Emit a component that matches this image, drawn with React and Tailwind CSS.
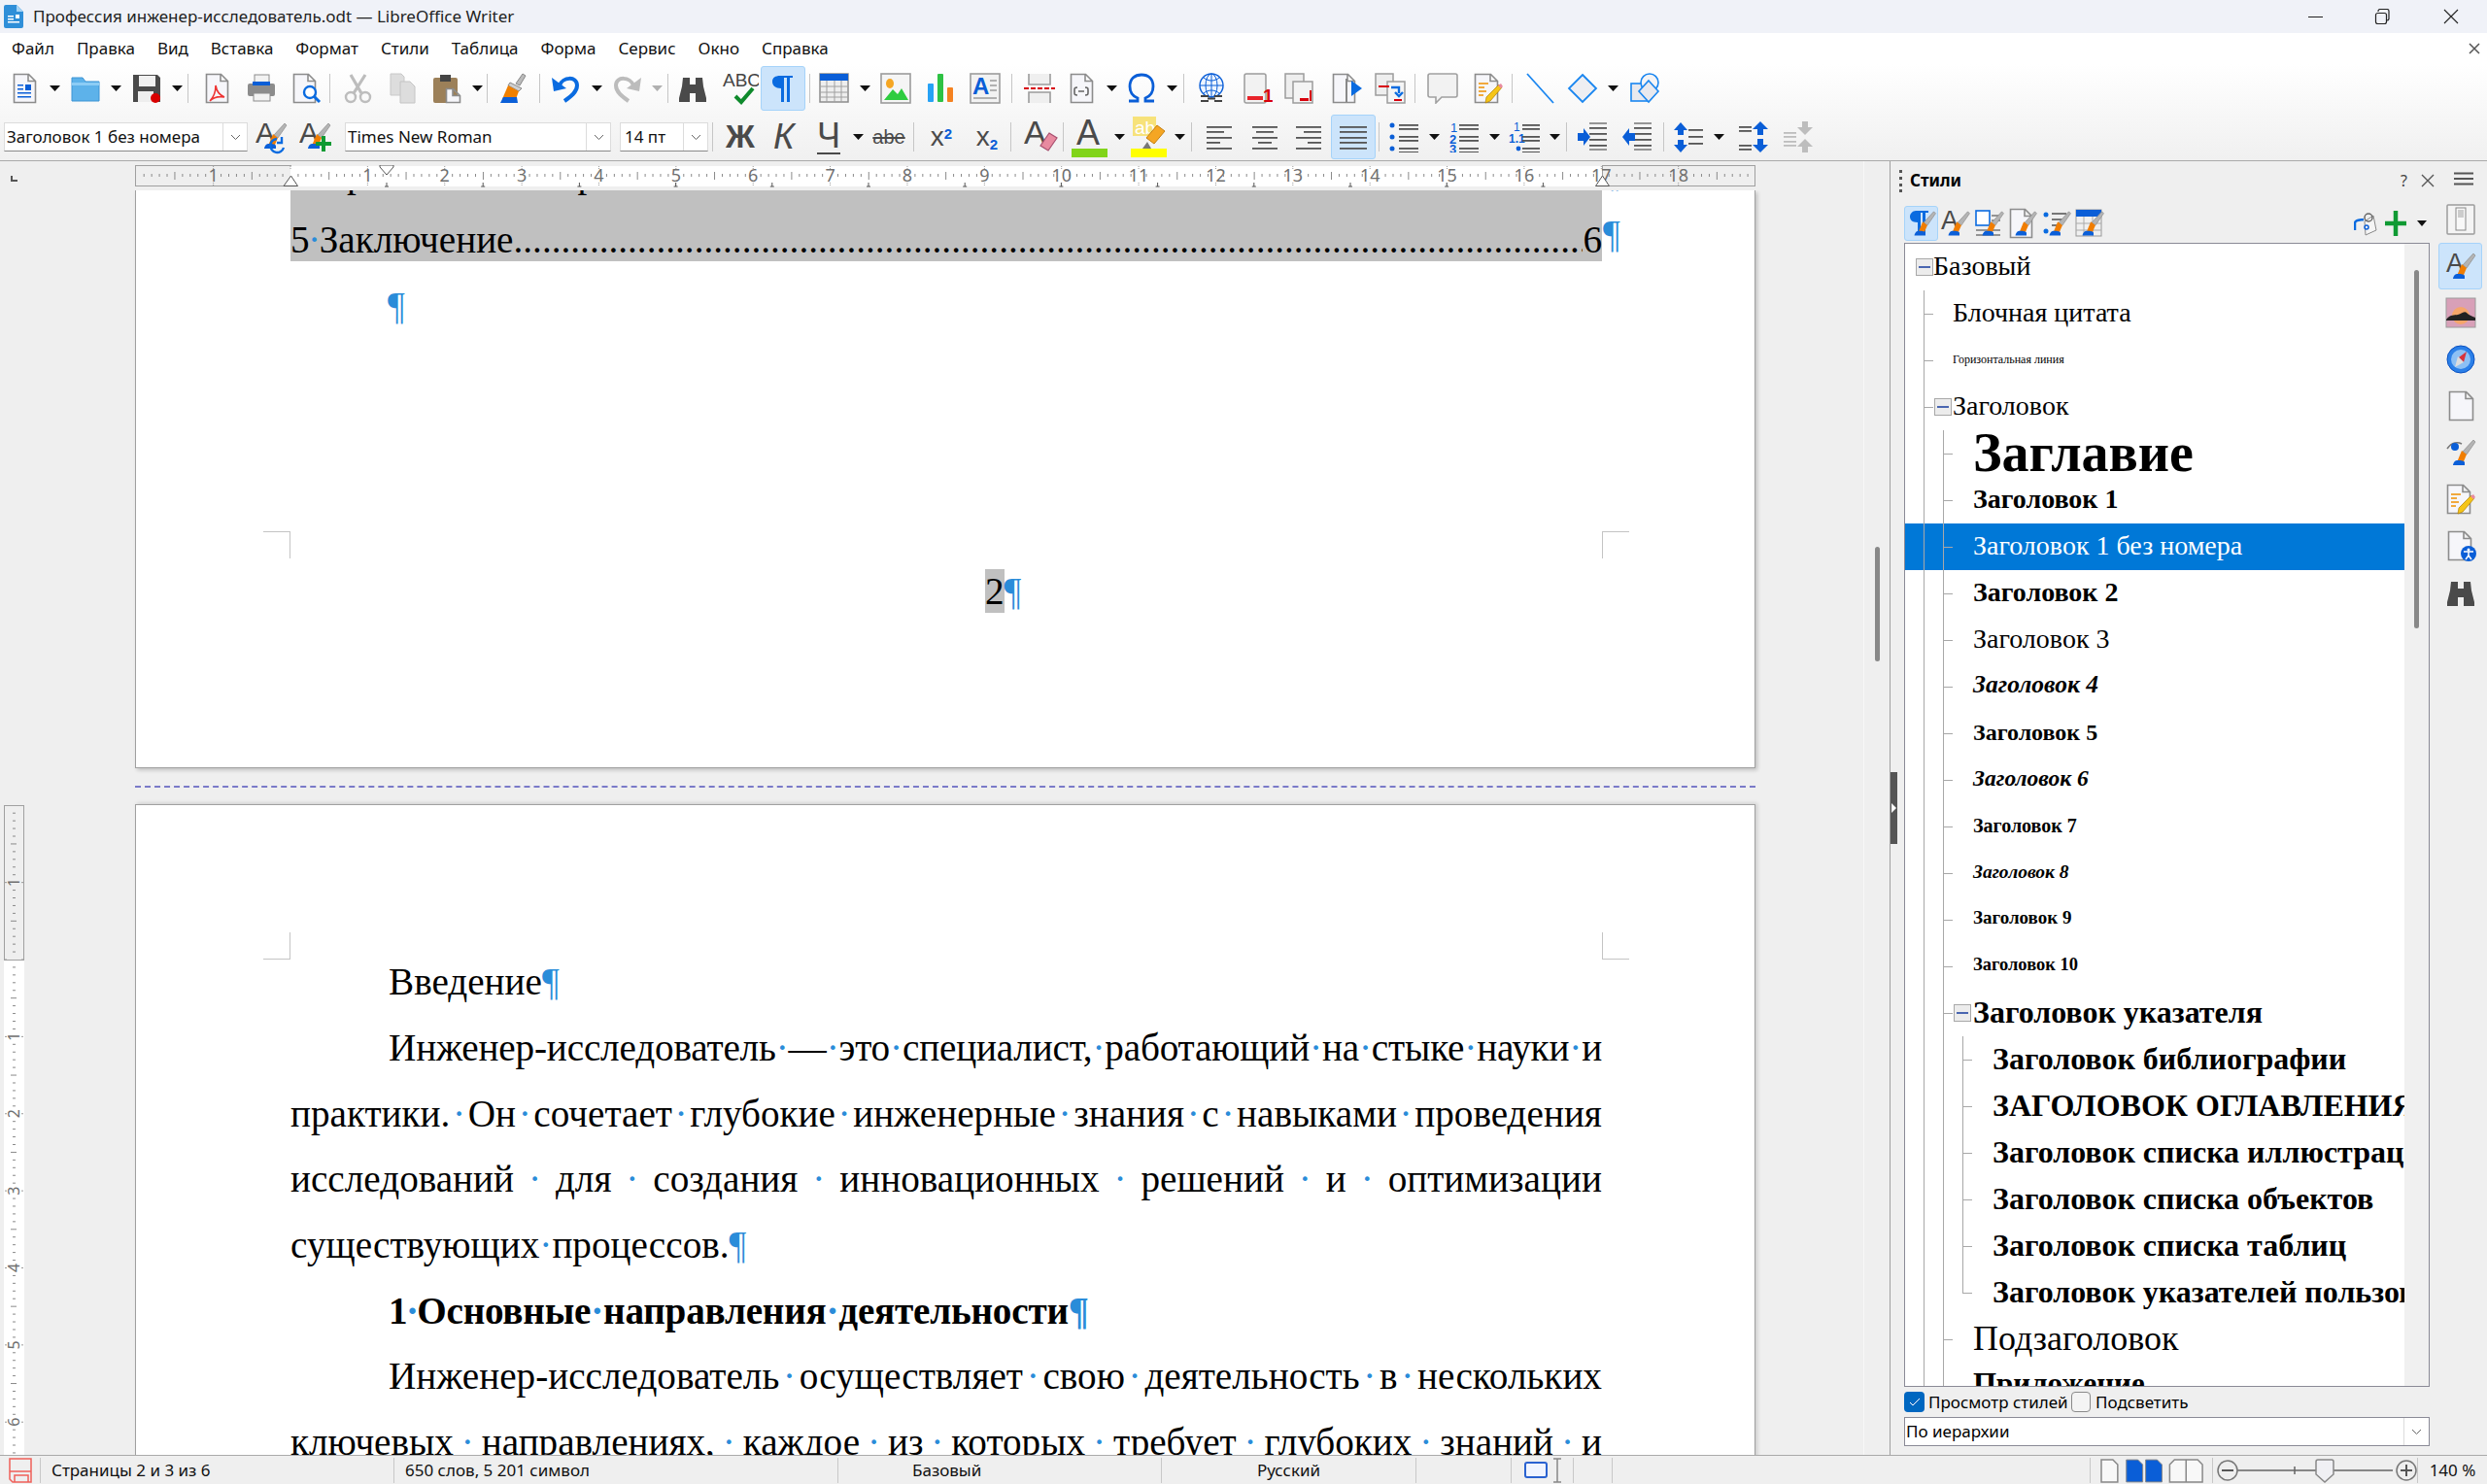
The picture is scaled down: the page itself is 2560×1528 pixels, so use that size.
// App.jsx — окно LibreOffice Writer со стилями
import React from "react";

const serif = "font-['Liberation_Serif',serif]";

const I = ({ children, w = 32, h = 32 }) => (
  <svg width={w} height={h} viewBox={`0 0 ${w} ${h}`} className="shrink-0">
    {children}
  </svg>
);

const Page = ({ x = 5, y = 1, w = 22, h = 30, fill = "#f6f6fa", stroke = "#8c8c8c" }) => (
  <path
    d={`M${x + 0.5} ${y + 0.5}h${w - 7}l7 7v${h - 8}h-${w}z M${x + w - 7} ${y + 0.5}v7h7`}
    fill={fill}
    stroke={stroke}
    strokeWidth="1.6"
  />
);

const Tip = ({ dx = 0, dy = 0 }) => (
  <g transform={`translate(${dx} ${dy})`}>
    <path d="M29 3l2 2-9 13-4-3z" fill="#b4b4b4" stroke="#8a8a8a" strokeWidth=".7" />
    <path d="M17 14l5 4-3 7-7 1z" fill="#f07d00" />
    <path d="M12 24c3 0 7 0 8 2v3H8c0-2 2-5 4-5z" fill="#0b5fd8" />
  </g>
);

const Bino = ({ c = "#4a4a4a" }) => (
  <path
    d="M6 5h7v7h6V5h7l1 9 3 12v4H19v-9h-6v9H2v-4l3-12z"
    fill={c}
  />
);

const AlignLines = ({ kind }) => {
  const ys = [5, 10, 16, 21, 27];
  const long = [26, 18, 26, 14, 26];
  return (
    <>
      {ys.map((y, i) => {
        const l = kind === "j" ? 28 : long[i];
        const x = kind === "l" ? 3 : kind === "r" ? 29 - l : 16 - l / 2;
        return <rect key={y} x={x} y={y} width={l} height="1.8" fill="#555" />;
      })}
    </>
  );
};

const Lines = ({ x = 12, w = 18, ys = [6, 11, 17, 22, 27], c = "#555" }) => (
  <>
    {ys.map((y) => (
      <rect key={y} x={x} y={y} width={w} height="1.8" fill={c} />
    ))}
  </>
);

const Icons = {
  newDoc: (
    <I>
      <Page />
      <path d="M9 12h6v1.6H9zm0 4h6v1.6H9zm0 4h14v1.6H9zm0 4h14v1.6H9z" fill="#0a5ed7" />
      <rect x="17" y="12" width="6" height="6" fill="#0a5ed7" />
    </I>
  ),
  open: (
    <I>
      <path d="M2 5h11l3 4h14v20H2z" fill="#5db2ea" stroke="#3d94d4" />
      <rect x="2" y="10" width="28" height="3" fill="#8cccf5" />
    </I>
  ),
  save: (
    <I>
      <path d="M2 2h25l3 3v25H2z" fill="#4a4a4a" />
      <rect x="8" y="3" width="17" height="11" fill="#f0f0f0" />
      <rect x="7" y="19" width="16" height="11" fill="#eee" />
      <circle cx="25" cy="26" r="5" fill="#d90000" />
    </I>
  ),
  pdf: (
    <I>
      <Page />
      <path d="M9 29c4-4 6-9 6-16 1 6 4 10 9 12-6-1-11 0-15 4z" fill="none" stroke="#e33" strokeWidth="1.6" />
    </I>
  ),
  print: (
    <I>
      <rect x="9" y="2" width="15" height="10" fill="#f2f2f2" stroke="#8c8c8c" />
      <rect x="2" y="11" width="28" height="13" rx="2" fill="#8c8c8c" />
      <rect x="7" y="9" width="18" height="4" fill="#0a5ed7" />
      <rect x="8" y="21" width="17" height="8" fill="#f2f2f2" stroke="#8c8c8c" />
    </I>
  ),
  preview: (
    <I>
      <Page x={3} />
      <circle cx="20" cy="20" r="6" fill="#fff" stroke="#0a6be0" strokeWidth="2.4" />
      <path d="M24 24l6 6" stroke="#0a6be0" strokeWidth="3" />
    </I>
  ),
  cut: (
    <I>
      <path d="M9 2l11 19M24 2L12 21" stroke="#bdbdbd" strokeWidth="3.2" />
      <circle cx="9" cy="25" r="5" fill="none" stroke="#bdbdbd" strokeWidth="2.4" />
      <circle cx="24" cy="25" r="5" fill="none" stroke="#bdbdbd" strokeWidth="2.4" />
    </I>
  ),
  copy: (
    <I>
      <path d="M4 1h11l3 3v19H4z" fill="#ddd" stroke="#c8c8c8" />
      <path d="M14 9h10l5 5v17H14z" fill="#ddd" stroke="#c4c4c4" />
    </I>
  ),
  paste: (
    <I>
      <rect x="2" y="5" width="25" height="26" rx="2" fill="#9c8059" />
      <rect x="9" y="2" width="11" height="7" fill="#444" />
      <Page x={15} y={16} w={14} h={15} />
    </I>
  ),
  brush: (
    <I>
      <path d="M27 1l3 2-6 10-4-2z" fill="#bbb" stroke="#888" />
      <path d="M14 10l12 6-3 3-11-6z" fill="#cfcfcf" stroke="#888" />
      <path d="M12 13l11 6-3 8H6z" fill="#f08000" />
      <path d="M7 25h14l1 6H4z" fill="#0b5fd8" />
    </I>
  ),
  undo: (
    <I>
      <path d="M9 13C12 4 27 3 27 13c0 7-7 12-13 16" fill="none" stroke="#0a6be0" strokeWidth="4" />
      <path d="M1 5l2 14 13-3z" fill="#0a6be0" />
    </I>
  ),
  redo: (
    <I>
      <path d="M23 13C20 4 5 3 5 13c0 7 7 12 13 16" fill="none" stroke="#bcbcbc" strokeWidth="4" />
      <path d="M31 5l-2 14-13-3z" fill="#bcbcbc" />
    </I>
  ),
  bino: (
    <I>
      <Bino />
    </I>
  ),
  abc: (
    <I w={38} h={38}>
      <text x="1" y="17" fontSize="19" fill="#444" fontFamily="Liberation Sans">ABC</text>
      <path d="M14 27l6 6 12-14" fill="none" stroke="#0f8a2c" strokeWidth="4" />
    </I>
  ),
  pil: (
    <I>
      <path d="M13 3h13v2h-3v25h-3V5h-3v25h-3V16c-6 0-9-3-9-7s3-6 8-6z" fill="#0a6be0" />
    </I>
  ),
  table: (
    <I>
      <rect x="1" y="1" width="29" height="29" fill="#eee" stroke="#8c8c8c" strokeWidth="1.5" />
      <rect x="1" y="1" width="29" height="7" fill="#0a5ed7" />
      <path d="M1 14h29M1 20h29M1 25h29M8 8v22M16 8v22M23 8v22" stroke="#a0a0a0" />
    </I>
  ),
  image: (
    <I>
      <rect x="1" y="1" width="30" height="30" fill="#f5f5f5" stroke="#9c9c9c" strokeWidth="1.6" />
      <ellipse cx="10" cy="11" rx="4" ry="5" fill="#f5a623" />
      <path d="M4 28l9-11 5 5 4-6 7 12z" fill="#2ecc40" />
    </I>
  ),
  chart: (
    <I>
      <rect x="3" y="11" width="6" height="19" rx="1" fill="#27a2f5" />
      <rect x="13" y="1" width="6" height="29" rx="1" fill="#2ec244" />
      <rect x="23" y="15" width="6" height="15" rx="1" fill="#f58220" />
    </I>
  ),
  textbox: (
    <I>
      <rect x="1" y="1" width="30" height="30" fill="#f2f2f2" stroke="#9c9c9c" strokeWidth="1.6" />
      <text x="3" y="22" fontSize="24" fontWeight="700" fill="#0a5ed7" fontFamily="Liberation Sans">A</text>
      <path d="M21 8h7M21 13h7M21 18h7M4 26h24" stroke="#9c9c9c" strokeWidth="1.6" />
    </I>
  ),
  pbreak: (
    <I>
      <path d="M5 1v11h22V1M5 31V20h22v11" fill="#efefef" stroke="#9c9c9c" strokeWidth="1.6" />
      <path d="M0 16h32" stroke="#d8000c" strokeWidth="2" strokeDasharray="5 2" />
    </I>
  ),
  field: (
    <I>
      <Page />
      <path d="M12 15c-3 0-3 1-3 3v2c0 2 0 3 3 3m8-8c3 0 3 1 3 3v2c0 2 0 3-3 3M13 19h6" fill="none" stroke="#666" strokeWidth="1.6" />
    </I>
  ),
  omega: (
    <I>
      <path d="M3 29h9v-3c-5-2-8-6-8-12C4 6 9 2 16 2s12 4 12 12c0 6-3 10-8 12v3h9" fill="none" stroke="#0a5ed7" strokeWidth="2.8" />
    </I>
  ),
  link: (
    <I>
      <circle cx="16" cy="13" r="12" fill="#eef5ff" stroke="#0a5ed7" strokeWidth="1.4" />
      <path d="M4 13h24M16 1v24M8 5c5 4 11 4 16 0M8 21c5-4 11-4 16 0" fill="none" stroke="#0a5ed7" />
      <ellipse cx="16" cy="13" rx="6" ry="12" fill="none" stroke="#0a5ed7" />
      <path d="M5 24h8M5 29h8M19 24h8M19 29h8M12 26.500h8" stroke="#444" strokeWidth="2" />
    </I>
  ),
  foot: (
    <I>
      <rect x="3" y="1" width="22" height="30" rx="2" fill="#f2f2f2" stroke="#9c9c9c" strokeWidth="1.5" />
      <rect x="6" y="24" width="16" height="4" fill="#e8232a" />
      <text x="22" y="30" fontSize="19" fontWeight="700" fill="#d8000c" fontFamily="Liberation Sans">1</text>
    </I>
  ),
  end: (
    <I>
      <rect x="1" y="1" width="19" height="25" fill="#eee" stroke="#9c9c9c" strokeWidth="1.5" />
      <rect x="9" y="9" width="20" height="22" fill="#f4f4f4" stroke="#9c9c9c" strokeWidth="1.5" />
      <rect x="16" y="26" width="9" height="3" fill="#d8000c" />
      <rect x="26" y="18" width="2" height="11" fill="#d8000c" />
    </I>
  ),
  mark: (
    <I>
      <Page x={1} />
      <rect x="14" y="6" width="2" height="24" fill="#888" />
      <path d="M20 8l11 8-11 8z" fill="#0a6be0" />
    </I>
  ),
  cross: (
    <I>
      <rect x="1" y="1" width="18" height="22" fill="#eee" stroke="#9c9c9c" strokeWidth="1.5" />
      <rect x="13" y="9" width="18" height="22" fill="#f5f5f5" stroke="#9c9c9c" strokeWidth="1.5" />
      <rect x="4" y="13" width="11" height="2" fill="#d8000c" />
      <rect x="20" y="27" width="8" height="2" fill="#d8000c" />
      <path d="M17 15h8v6M21 20l4 4 4-4" fill="none" stroke="#0a6be0" strokeWidth="2.4" />
    </I>
  ),
  comment: (
    <I>
      <path d="M3 1h26a2 2 0 012 2v20a2 2 0 01-2 2H15l-6 6v-6H3a2 2 0 01-2-2V3a2 2 0 012-2z" fill="#f2f2f2" stroke="#a0a0a0" strokeWidth="1.6" />
    </I>
  ),
  track: (
    <I>
      <Page x={2} w={23} />
      <path d="M6 11h10M6 15h6M6 19h8M6 23h5" stroke="#f09000" strokeWidth="1.5" />
      <path d="M27 12l3 3-12 14-5 2 1-6z" fill="#f5c518" stroke="#b07d00" strokeWidth=".7" />
      <path d="M26 13l3 3 2-2-2-3z" fill="#e88aa0" />
    </I>
  ),
  line: (
    <I>
      <path d="M3 1l27 30" stroke="#1a86f0" strokeWidth="1.8" />
    </I>
  ),
  diamond: (
    <I>
      <path d="M16 2l14 14-14 14L2 16z" fill="#eeeef2" stroke="#1a86f0" strokeWidth="1.8" />
    </I>
  ),
  shapes: (
    <I>
      <rect x="2" y="11" width="18" height="18" fill="#e9e9ee" stroke="#1a86f0" strokeWidth="1.6" />
      <circle cx="21" cy="10" r="9" fill="#f4f4f6" stroke="#1a86f0" strokeWidth="1.6" />
      <path d="M20 8l10 11-10 11-10-11z" fill="#e9e9ee" stroke="#1a86f0" strokeWidth="1.6" />
    </I>
  ),
  styleUpd: (
    <I w={36} h={36}>
      <text x="0" y="24" fontSize="30" fill="#4a4a4a" fontFamily="Liberation Sans">A</text>
      <Tip dx={1} dy={1} />
      <path d="M22 20a7 7 0 107 9M27 18v6h-5" fill="none" stroke="#0a6be0" strokeWidth="2.4" />
    </I>
  ),
  styleNew: (
    <I w={36} h={36}>
      <text x="0" y="24" fontSize="30" fill="#4a4a4a" fontFamily="Liberation Sans">A</text>
      <Tip dx={1} dy={1} />
      <path d="M25 17v16M17 25h16" stroke="#0f9a33" strokeWidth="4" />
    </I>
  ),
  clear: (
    <I w={36} h={38}>
      <text x="0" y="26" fontSize="34" fill="#4a4a4a" fontFamily="Liberation Sans">A</text>
      <path d="M26 15l8 5-9 13-8-5z" fill="#e88aa0" stroke="#a85070" strokeWidth="1.2" />
    </I>
  ),
  fontColor: (
    <I w={38} h={42}>
      <text x="6" y="29" fontSize="36" fill="#4a4a4a" fontFamily="Liberation Sans">A</text>
      <rect x="1" y="33" width="37" height="9" fill="#81d41a" />
    </I>
  ),
  hilite: (
    <I w={38} h={42}>
      <rect x="3" y="0" width="24" height="20" fill="#f7e27a" />
      <text x="5" y="18" fontSize="19" fill="#fff" fontFamily="Liberation Sans">ab</text>
      <path d="M28 9l8 6-11 13-8-6z" fill="#f5a623" stroke="#c47f10" />
      <path d="M13 33l5-7 4 7z" fill="#777" />
      <rect x="1" y="33" width="37" height="9" fill="#ffff00" />
    </I>
  ),
  bullets: (
    <I>
      <circle cx="4" cy="4" r="2.5" fill="#0a5ed7" />
      <circle cx="4" cy="16" r="2.5" fill="#0a5ed7" />
      <circle cx="4" cy="28" r="2.5" fill="#0a5ed7" />
      <Lines x={11} w={20} ys={[3, 7, 15, 19, 27, 31]} />
    </I>
  ),
  nums: (
    <I>
      <text x="2" y="11" fontSize="13" fill="#0a5ed7" fontFamily="Liberation Sans">1</text>
      <text x="1" y="23" fontSize="13" fontWeight="700" fill="#0a5ed7" fontFamily="Liberation Sans">2</text>
      <text x="1" y="33" fontSize="13" fontWeight="700" fill="#0a5ed7" fontFamily="Liberation Sans">3</text>
      <Lines x={11} w={20} ys={[3, 7, 15, 19, 27, 31]} />
    </I>
  ),
  outline: (
    <I>
      <text x="5" y="10" fontSize="12" fill="#0a5ed7" fontFamily="Liberation Sans">1</text>
      <text x="0" y="22" fontSize="12" fontWeight="700" fill="#0a5ed7" fontFamily="Liberation Sans">1.1</text>
      <circle cx="10" cy="28" r="2.4" fill="#0a5ed7" />
      <Lines x={14} w={18} ys={[3, 7, 15, 19, 27, 31]} />
    </I>
  ),
  indInc: (
    <I>
      <Lines x={13} w={18} ys={[6, 12, 18, 24]} />
      <path d="M1 12h6V7l7 9-7 9v-5H1z" fill="#0a5ed7" />
      <path d="M13 2h18M13 29h18" stroke="#777" strokeWidth="1.4" />
    </I>
  ),
  indDec: (
    <I>
      <Lines x={13} w={18} ys={[6, 12, 18, 24]} />
      <path d="M14 12H8V7l-7 9 7 9v-5h6z" fill="#0a5ed7" />
      <path d="M13 2h18M13 29h18" stroke="#777" strokeWidth="1.4" />
    </I>
  ),
  spacing: (
    <I>
      <path d="M8 1l7 8h-4v5H5V9H1zM8 32l7-8h-4v-5H5v5H1z" fill="#0a5ed7" />
      <Lines x={16} w={15} ys={[8, 15, 22]} />
    </I>
  ),
  paraInc: (
    <I>
      <Lines x={1} w={13} ys={[5, 9, 24, 28]} />
      <path d="M23 0l8 8h-5v6h-6V8h-5zM23 32l8-8h-5v-6h-6v6h-5z" fill="#0a5ed7" />
    </I>
  ),
  paraDec: (
    <I>
      <Lines x={1} w={13} ys={[11, 15, 20, 24]} c="#bdbdbd" />
      <path d="M23 14l8-8h-5V0h-6v6h-5zM23 18l8 8h-5v6h-6v-6h-5z" fill="#bdbdbd" />
    </I>
  ),
};

const Btn = ({ c = "", active, children }) => (
  <div
    className={`flex h-[46px] w-[46px] shrink-0 items-center justify-center rounded-[3px] border ${
      active ? "border-[#a5d3fa] bg-[#cce4fb]" : "border-transparent"
    } ${c}`}
  >
    {children}
  </div>
);

const Arr = ({ c = "", off }) => (
  <div className={`flex h-[46px] w-[17px] shrink-0 items-center justify-center ${c}`}>
    <svg width="11" height="6" viewBox="0 0 11 6">
      <path d="M0 0h11L5.500 6z" fill={off ? "#b0b0b0" : "#111"} />
    </svg>
  </div>
);

const Sep = ({ c = "" }) => <div className={`h-[30px] w-px shrink-0 bg-[#c6c6c6] ${c}`} />;

const Combo = ({ c = "", w = "", btn = "w-[25px]", children }) => (
  <div className={`flex h-[30px] shrink-0 items-center border border-[#dcdcdc] border-b-[#8a8a8a] bg-white text-[17px] text-[#111] ${w} ${c}`}>
    <span className="flex-1 whitespace-nowrap pl-[2px]">{children}</span>
    <span className={`flex h-full shrink-0 items-center justify-center border-l border-[#dcdcdc] ${btn}`}>
      <svg width="11" height="7" viewBox="0 0 11 7">
        <path d="M1 1l4.500 4.500L10 1" fill="none" stroke="#666" />
      </svg>
    </span>
  </div>
);

function Toolbars() {
  return (
    <div className="h-[100px] border-b border-[#aaa] bg-linear-to-b from-white to-[#f0f0f0]">
      <div className="flex h-[49px] items-center pl-[2px]">
        <Btn>{Icons.newDoc}</Btn><Arr />
        <Btn>{Icons.open}</Btn><Arr />
        <Btn>{Icons.save}</Btn><Arr />
        <Sep c="ml-[2px] mr-[6px]" />
        <Btn>{Icons.pdf}</Btn>
        <Btn>{Icons.print}</Btn>
        <Btn>{Icons.preview}</Btn>
        <Sep c="ml-[1px] mr-[5px]" />
        <Btn>{Icons.cut}</Btn>
        <Btn>{Icons.copy}</Btn>
        <Btn>{Icons.paste}</Btn><Arr />
        <Sep c="ml-[1px] mr-[2px]" />
        <Btn>{Icons.brush}</Btn>
        <Sep c="ml-[5px] mr-[4px]" />
        <Btn>{Icons.undo}</Btn><Arr />
        <Btn c="-ml-[1px]">{Icons.redo}</Btn><Arr off />
        <Sep c="ml-[2px] mr-[2px]" />
        <Btn>{Icons.bino}</Btn>
        <Btn c="ml-[3px]">{Icons.abc}</Btn>
        <Btn c="-ml-[2px]" active>{Icons.pil}</Btn>
        <Sep c="ml-[4px] mr-[2px]" />
        <Btn>{Icons.table}</Btn><Arr />
        <Btn>{Icons.image}</Btn>
        <Btn>{Icons.chart}</Btn>
        <Btn>{Icons.textbox}</Btn>
        <Sep c="ml-[4px] mr-[5px]" />
        <Btn>{Icons.pbreak}</Btn>
        <Btn c="-ml-[3px]">{Icons.field}</Btn><Arr />
        <Btn c="-ml-[1px]">{Icons.omega}</Btn><Arr />
        <Sep c="ml-[3px] mr-[5px]" />
        <Btn>{Icons.link}</Btn>
        <Btn c="ml-[1px]">{Icons.foot}</Btn>
        <Btn c="-ml-[2px]">{Icons.end}</Btn>
        <Btn c="ml-[3px]">{Icons.mark}</Btn>
        <Btn c="-ml-[2px]">{Icons.cross}</Btn>
        <Sep c="ml-[2px] mr-[5px]" />
        <Btn>{Icons.comment}</Btn>
        <Btn c="ml-[1px]">{Icons.track}</Btn>
        <Sep c="ml-[1px] mr-[5px]" />
        <Btn>{Icons.line}</Btn>
        <Btn c="-ml-[2px]">{Icons.diamond}</Btn><Arr />
        <Btn c="ml-[1px]">{Icons.shapes}</Btn>
      </div>
      <div className="flex h-[50px] items-center pl-[4px] pt-[2px]">
        <Combo w="w-[251px]">Заголовок 1 без номера</Combo>
        <Btn c="ml-[3px]">{Icons.styleUpd}</Btn>
        <Btn c="-ml-[1px]">{Icons.styleNew}</Btn>
        <Combo w="w-[274px]" c="ml-[6px]">Times New Roman</Combo>
        <Combo w="w-[91px]" c="ml-[9px] pl-[2px]" btn="w-[25px]">14 пт</Combo>
        <Sep c="ml-[4px] mr-[5px]" />
        <Btn><span className="font-['Liberation_Sans',sans-serif] text-[33px] font-bold text-[#4a4a4a]">Ж</span></Btn>
        <Btn c="-ml-[1px]"><span className="font-['Liberation_Sans',sans-serif] text-[37px] italic text-[#4a4a4a]">К</span></Btn>
        <Btn><span className="border-b-2 border-[#4a4a4a] font-['Liberation_Sans',sans-serif] text-[36px] leading-[34px] text-[#4a4a4a]">Ч</span></Btn>
        <Arr c="-ml-[1px]" />
        <Btn><span className="font-['Liberation_Sans',sans-serif] text-[20px] text-[#4a4a4a] line-through">abe</span></Btn>
        <Sep c="ml-[2px] mr-[5px]" />
        <Btn><span className="font-['Liberation_Sans',sans-serif] text-[28px] text-[#4a4a4a]">x<sup className="text-[15px] font-bold text-[#0a5ed7]">2</sup></span></Btn>
        <Btn c="ml-[1px]"><span className="font-['Liberation_Sans',sans-serif] text-[28px] text-[#4a4a4a]">x<sub className="text-[15px] font-bold text-[#0a5ed7]">2</sub></span></Btn>
        <Sep c="ml-[1px] mr-[8px]" />
        <Btn>{Icons.clear}</Btn>
        <Sep c="-ml-[1px] mr-[3px]" />
        <Btn>{Icons.fontColor}</Btn><Arr />
        <Btn c="-ml-[2px]">{Icons.hilite}</Btn><Arr c="ml-[1px]" />
        <Sep c="ml-[3px] mr-[5px]" />
        <Btn><I><AlignLines kind="l" /></I></Btn>
        <Btn c="ml-[1px]"><I><AlignLines kind="c" /></I></Btn>
        <Btn c="-ml-[1px]"><I><AlignLines kind="r" /></I></Btn>
        <Btn active><I><AlignLines kind="j" /></I></Btn>
        <Sep c="ml-[3px] mr-[2px]" />
        <Btn>{Icons.bullets}</Btn><Arr />
        <Btn c="-ml-[1px]">{Icons.nums}</Btn><Arr />
        <Btn c="-ml-[1px]">{Icons.outline}</Btn><Arr />
        <Sep c="ml-[3px] mr-[3px]" />
        <Btn>{Icons.indInc}</Btn>
        <Btn>{Icons.indDec}</Btn>
        <Sep c="ml-[4px] mr-[2px]" />
        <Btn>{Icons.spacing}</Btn><Arr />
        <Btn c="ml-[4px]">{Icons.paraInc}</Btn>
        <Btn>{Icons.paraDec}</Btn>
      </div>
    </div>
  );
}

const CM = 79.37;

function HRuler() {
  const ticks = [];
  for (let i = -20; i <= 190; i++) {
    const x = 160 + (CM * i) / 10;
    if (x < 4 || x > 1664) continue;
    if (i % 10 === 0) {
      ticks.push(<path key={i} d={`M${x} 1v3M${x} 18v3`} stroke="#9a9a9a" strokeDasharray="1 1" />);
      if (i !== 0) {
        ticks.push(
          <text key={`t${i}`} x={x} y={17} textAnchor="middle" fontSize="18" fill="#6f6f6f" fontFamily="Noto Sans">
            {Math.abs(i / 10)}
          </text>
        );
      }
    } else {
      const big = i % 5 === 0;
      ticks.push(<path key={i} d={`M${x} ${big ? 7 : 9}v${big ? 8 : 3}`} stroke="#8a8a8a" />);
    }
  }
  const tabs = [];
  for (let k = 0; k < 13; k++) {
    const x = 259 + 99.2 * k;
    tabs.push(<path key={k} d={`M${x} 18v4M${x - 2} 22h4`} stroke="#555" />);
  }
  return (
    <svg width="1668" height="24" viewBox="0 0 1668 24">
      <rect x="0.500" y="0.500" width="160" height="21" fill="#efefef" stroke="#a0a0a0" />
      <rect x="160" y="1" width="1350" height="21" fill="#fff" />
      <rect x="1510.500" y="0.500" width="157" height="21" fill="#efefef" stroke="#a0a0a0" />
      {ticks}
      {tabs}
      <path d="M160.500 11l7 10.500H153z" fill="#fff" stroke="#555" />
      <path d="M1510.500 11l7 10.500h-14z" fill="#fff" stroke="#555" />
      <path d="M252 0h14v2l-7 8-7-8z" fill="#fff" stroke="#555" />
    </svg>
  );
}

function VRuler() {
  const ticks = [];
  for (let i = -20; i <= 70; i++) {
    const y = 159 + (CM * i) / 10;
    if (y < 5 || y > 668) continue;
    if (i % 10 === 0) {
      ticks.push(<path key={i} d={`M1 ${y}h2M18 ${y}h2`} stroke="#9a9a9a" />);
      if (i !== 0) {
        ticks.push(
          <text key={`t${i}`} transform={`translate(16 ${y}) rotate(-90)`} textAnchor="middle" fontSize="16" fill="#6f6f6f" fontFamily="Noto Sans">
            {Math.abs(i / 10)}
          </text>
        );
      }
    } else {
      const big = i % 5 === 0;
      ticks.push(<path key={i} d={`M${big ? 7 : 9} ${y}h${big ? 6 : 3}`} stroke="#8a8a8a" />);
    }
  }
  return (
    <svg width="21" height="669" viewBox="0 0 21 669">
      <rect x="0.500" y="0.500" width="20" height="159" fill="#efefef" stroke="#a0a0a0" />
      <rect x="0" y="160" width="21" height="509" fill="#fff" />
      {ticks}
    </svg>
  );
}

const Pil = () => <span className="text-[#2a8cd9]">¶</span>;
const Dot = ({ c = "" }) => <span className={`text-[#2a8cd9] ${c}`}>·</span>;

const Line = ({ c = "", children }) => (
  <div className={`flex h-[67.7px] items-end whitespace-pre ${c}`}>
    <div className="leading-[44px]">{children}</div>
  </div>
);

// по ширине: слова и точки расходятся равномерно
const Just = ({ text, c = "" }) => {
  const parts = text.split(" ");
  return (
    <div className={`flex h-[67.7px] items-end justify-between whitespace-pre leading-[44px] ${c}`}>
      {parts.map((w, i) => (
        <React.Fragment key={i}>
          {i > 0 && <Dot />}
          <span>{w}</span>
        </React.Fragment>
      ))}
    </div>
  );
};

// после номера раздела точка в оригинале уже
const Words = ({ text }) =>
  text.split(" ").map((w, i, all) => (
    <React.Fragment key={i}>
      {i > 0 && <Dot c={i === 1 && /^\d$/.test(all[0]) ? "-mx-[1.5px]" : ""} />}
      {w}
    </React.Fragment>
  ));

const mark = "absolute h-[28px] w-[28px] border-[#c4c4c4]";

function Pages() {
  return (
    <div className={`w-[1668px] shrink-0 text-[39.2px] text-black ${serif}`}>
      <div className="relative h-[595px] border-x border-b border-[#a0a0a0] bg-white pl-[159px] pr-[157px] shadow-[2px_2px_4px_rgba(0,0,0,0.2)]">
        <div className="flex h-[73px] flex-col justify-end overflow-hidden bg-[#c0c0c0]">
          <Line c="shrink-0">
            <Words text="4 Практическое применение" />
          </Line>
          <div className="flex h-[67.7px] shrink-0 items-end whitespace-pre leading-[44px]">
            <span><Words text="5 Заключение" /></span>
            <span className="flex-1 overflow-hidden">{".".repeat(140)}</span>
            <span>6</span>
          </div>
        </div>
        <span className="absolute left-[1510px] top-[23px] leading-[44px]"><Pil /></span>
        <span className="absolute left-[1510px] top-[-40px] leading-[44px]"><Pil /></span>
        <Line c="pl-[100px]"><Pil /></Line>
        <div className="mt-[249px] flex pl-[715px] leading-[45px]">
          <span className="bg-[#c0c0c0]">2</span>
          <Pil />
        </div>
        <span className={`${mark} left-[131px] top-[351px] border-t border-r`} />
        <span className={`${mark} left-[1509px] top-[351px] border-t border-l`} />
      </div>
      <div className="flex h-[37px] items-center">
        <div className="w-full border-t-2 border-dashed border-[#7a7ac8]" />
      </div>
      <div className="relative h-[700px] border-x border-t border-[#a0a0a0] bg-white pl-[159px] pr-[157px] pt-[136.5px] shadow-[2px_-1px_4px_rgba(0,0,0,0.15)]">
        <span className={`${mark} left-[131px] top-[131px] border-b border-r`} />
        <span className={`${mark} left-[1509px] top-[131px] border-b border-l`} />
        <Line c="pl-[101px]">Введение<Pil /></Line>
        <Just c="pl-[101px] tracking-[-0.17px]" text="Инженер-исследователь — это специалист, работающий на стыке науки и" />
        <Just text="практики. Он сочетает глубокие инженерные знания с навыками проведения" />
        <Just text="исследований для создания инновационных решений и оптимизации" />
        <Line><Words text="существующих процессов." /><Pil /></Line>
        <Line c="pl-[101px] font-bold tracking-[-0.23px]"><Words text="1 Основные направления деятельности" /><Pil /></Line>
        <Just c="pl-[101px]" text="Инженер-исследователь осуществляет свою деятельность в нескольких" />
        <Just text="ключевых направлениях, каждое из которых требует глубоких знаний и" />
      </div>
    </div>
  );
}

const tree = [
  { t: "Базовый", lvl: 0, box: true, c: "pl-[29px] text-[28px]" },
  { t: "Блочная цитата", lvl: 1, c: "pl-[49px] text-[28px]" },
  { t: "Горизонтальная линия", lvl: 1, c: "pl-[49px] text-[12px]" },
  { t: "Заголовок", lvl: 1, box: true, c: "pl-[49px] text-[28px]" },
  { t: "Заглавие", lvl: 2, c: "pl-[70px] text-[56px] font-bold" },
  { t: "Заголовок 1", lvl: 2, c: "pl-[70px] text-[28px] font-bold" },
  { t: "Заголовок 1 без номера", lvl: 2, sel: true, c: "pl-[70px] text-[28px]" },
  { t: "Заголовок 2", lvl: 2, c: "pl-[70px] text-[28px] font-bold" },
  { t: "Заголовок 3", lvl: 2, c: "pl-[70px] text-[28px]" },
  { t: "Заголовок 4", lvl: 2, c: "pl-[70px] text-[25.5px] font-bold italic" },
  { t: "Заголовок 5", lvl: 2, c: "pl-[70px] text-[24px] font-bold" },
  { t: "Заголовок 6", lvl: 2, c: "pl-[70px] text-[23.5px] font-bold italic" },
  { t: "Заголовок 7", lvl: 2, c: "pl-[70px] text-[20px] font-bold" },
  { t: "Заголовок 8", lvl: 2, c: "pl-[70px] text-[19.5px] font-bold italic" },
  { t: "Заголовок 9", lvl: 2, c: "pl-[70px] text-[19px] font-bold" },
  { t: "Заголовок 10", lvl: 2, c: "pl-[70px] text-[18.5px] font-bold" },
  { t: "Заголовок указателя", lvl: 2, box: true, c: "pl-[70px] text-[32px] font-bold" },
  { t: "Заголовок библиографии", lvl: 3, c: "pl-[90px] text-[32px] font-bold" },
  { t: "ЗАГОЛОВОК ОГЛАВЛЕНИЯ", lvl: 3, c: "pl-[90px] text-[32px] font-bold" },
  { t: "Заголовок списка иллюстраций", lvl: 3, c: "pl-[90px] text-[32px] font-bold" },
  { t: "Заголовок списка объектов", lvl: 3, c: "pl-[90px] text-[32px] font-bold" },
  { t: "Заголовок списка таблиц", lvl: 3, c: "pl-[90px] text-[32px] font-bold" },
  { t: "Заголовок указателей пользователя", lvl: 3, c: "pl-[90px] text-[32px] font-bold" },
  { t: "Подзаголовок", lvl: 2, c: "pl-[70px] text-[36px]" },
  { t: "Приложение", lvl: 2, c: "pl-[70px] text-[31px] font-bold" },
];

const guideX = ["", "left-[19px]", "left-[39px]", "left-[59px]"];

const TreeBox = ({ c }) => (
  <span className={`absolute top-[15px] flex h-[18px] w-[18px] items-center justify-center border border-[#a8a8a8] bg-[#ececec] ${c}`}>
    <span className="h-[2px] w-[12px] bg-[#4a66b0]" />
  </span>
);

function TreeRow({ r, i }) {
  const endsAt3 = i === 22;
  return (
    <div
      className={`relative flex h-[48px] shrink-0 items-center whitespace-nowrap pb-[3px] ${r.c} ${
        r.sel ? "bg-[#0078d7] text-white" : "text-black"
      }`}
    >
      {r.lvl >= 1 && <span className={`absolute top-0 h-[48px] w-px bg-[#a8a8a8] ${guideX[1]}`} />}
      {r.lvl >= 2 && <span className={`absolute top-0 h-[48px] w-px bg-[#a8a8a8] ${guideX[2]}`} />}
      {r.lvl >= 3 && (
        <span className={`absolute top-0 w-px bg-[#a8a8a8] ${endsAt3 ? "h-[24px]" : "h-[48px]"} ${guideX[3]}`} />
      )}
      {r.lvl >= 1 && (
        <span className={`absolute top-[24px] h-px w-[10px] bg-[#a8a8a8] ${guideX[r.lvl]}`} />
      )}
      {r.box && r.lvl === 0 && <TreeBox c="left-[11px]" />}
      {r.box && r.lvl === 1 && <TreeBox c="left-[30px]" />}
      {r.box && r.lvl === 2 && <TreeBox c="left-[50px]" />}
      <span className="relative">{r.t}</span>
    </div>
  );
}

const FamTip = ({ children }) => (
  <I>
    {children}
    <g transform="translate(1 1) scale(.95)">
      <Tip />
    </g>
  </I>
);

const Deck = ({ active, children }) => (
  <div
    className={`flex h-[48px] w-[45px] items-center justify-center rounded-[3px] border ${
      active ? "border-[#a5d3fa] bg-[#cce4fb]" : "border-transparent"
    }`}
  >
    <I>{children}</I>
  </div>
);

function Sidebar() {
  return (
    <div className="flex min-w-0 flex-1 bg-[#efefef]">
      <div className="relative flex w-[564px] shrink-0 flex-col pl-[14px] pr-[9px]">
        <div className="flex h-[44px] shrink-0 items-center pb-[5px]">
          <svg width="6" height="24" viewBox="0 0 6 24" className="-ml-[6px] mr-[6px]">
            <path d="M1 1h3v3H1zm0 7h3v3H1zm0 7h3v3H1zm0 6h3v3H1z" fill="#555" />
          </svg>
          <span className="text-[17px] font-bold text-black">Стили</span>
          <span className="ml-auto mr-[14px] text-[16px] text-[#444]">?</span>
          <svg width="14" height="14" viewBox="0 0 14 14" className="mr-[-5px]">
            <path d="M1 1l12 12M13 1L1 13" stroke="#555" strokeWidth="1.4" />
          </svg>
        </div>
        <div className="flex h-[40px] shrink-0 items-center gap-[0px]">
          <div className="flex h-[36px] w-[35px] items-center justify-center rounded-[3px] border border-[#a5d3fa] bg-[#cce4fb]">
            <FamTip><path d="M10 3h13v2h-3v22h-3V5h-2v22h-3V15c-6 0-8-3-8-6s3-6 6-6z" fill="#0a6be0" /></FamTip>
          </div>
          <div className="flex w-[36px] justify-center">
            <FamTip><text x="1" y="22" fontSize="27" fill="#4a4a4a" fontFamily="Liberation Sans">A</text></FamTip>
          </div>
          <div className="flex w-[33px] justify-center">
            <FamTip>
              <rect x="2" y="3" width="14" height="15" fill="#fff" stroke="#0a6be0" strokeWidth="1.6" />
              <path d="M18 8h9M18 13h9M2 23h25M2 28h25" stroke="#777" strokeWidth="1.5" />
            </FamTip>
          </div>
          <div className="flex w-[35px] justify-center">
            <FamTip><Page x={3} /></FamTip>
          </div>
          <div className="flex w-[35px] justify-center">
            <FamTip>
              <circle cx="5" cy="7" r="2.5" fill="#0a6be0" />
              <circle cx="5" cy="24" r="2.5" fill="#0a6be0" />
              <path d="M11 6h15M11 12h11M11 18h8" stroke="#777" strokeWidth="1.8" />
            </FamTip>
          </div>
          <div className="flex w-[33px] justify-center">
            <FamTip>
              <rect x="2" y="2" width="26" height="27" fill="#f0f0f0" stroke="#999" />
              <rect x="2" y="2" width="26" height="7" fill="#0a5ed7" />
              <path d="M2 16h26M2 23h26M10 9v20M19 9v20" stroke="#aaa" />
            </FamTip>
          </div>
          <div className="ml-auto flex items-center">
            <svg width="24" height="28" viewBox="0 0 24 28">
              <path d="M11 12l9-6 3 15-11 5z" fill="#f5f5f5" stroke="#8a8a8a" />
              <circle cx="15" cy="8" r="4" fill="none" stroke="#666" strokeWidth="1.5" />
              <circle cx="13" cy="18" r="2" fill="none" stroke="#0a5ed7" strokeWidth="1.5" />
              <path d="M1 21v-7c0-3 3-3 9-4" fill="none" stroke="#0a6be0" strokeWidth="2.5" />
            </svg>
            <svg width="24" height="30" viewBox="0 0 24 30" className="ml-[7px]">
              <path d="M12 2v26M1 15h22" stroke="#0f9a33" strokeWidth="4.500" />
            </svg>
            <svg width="10" height="6" viewBox="0 0 10 6" className="ml-[10px] mr-[3px]">
              <path d="M0 0h10L5 6z" fill="#111" />
            </svg>
          </div>
        </div>
        <div className={`flex h-[1178px] shrink-0 overflow-hidden border border-[#8a8a96] bg-white ${serif}`}>
          <div className="flex w-[514px] shrink-0 flex-col overflow-hidden">
            {tree.map((r, i) => (
              <TreeRow key={r.t} r={r} i={i} />
            ))}
          </div>
          <div className="flex-1 bg-[#f0f0f0] pl-[10px] pt-[27px]">
            <div className="h-[369px] w-[5px] rounded-full bg-[#888]" />
          </div>
        </div>
        <div className="flex h-[31px] shrink-0 items-center text-[17px] text-black">
          <span className="flex h-[21px] w-[21px] items-center justify-center rounded-[4px] bg-[#0067c0]">
            <svg width="12" height="10" viewBox="0 0 12 10">
              <path d="M1 5l3 3 7-7" fill="none" stroke="#fff" />
            </svg>
          </span>
          <span className="ml-[4px] w-[147px] whitespace-nowrap">Просмотр стилей</span>
          <span className="h-[21px] w-[20px] rounded-[4px] border border-[#8a8a8a] bg-[#f4f4f4]" />
          <span className="ml-[5px]">Подсветить</span>
        </div>
        <div className="flex h-[30px] shrink-0 items-center border border-[#8a8a96] bg-white text-[17px] text-black">
          <span className="flex-1 pl-[1px]">По иерархии</span>
          <span className="flex h-full w-[26px] items-center justify-center border-l border-[#dcdcdc]">
            <svg width="11" height="7" viewBox="0 0 11 7">
              <path d="M1 1l4.500 4.500L10 1" fill="none" stroke="#666" />
            </svg>
          </span>
        </div>
        {/* ручка сворачивания панели */}
        <div className="absolute left-0 top-[629px] flex h-[74px] w-[7px] items-center justify-center bg-[#555]">
          <svg width="5" height="10" viewBox="0 0 5 10">
            <path d="M0 0l5 5-5 5z" fill="#fff" />
          </svg>
        </div>
      </div>
      <div className="flex flex-1 flex-col">
        <div className="flex h-[36px] items-center justify-center pl-[2px]">
          <svg width="24" height="16" viewBox="0 0 24 16">
            <path d="M2 2.500h20M2 8h20M2 13.500h20" stroke="#555" strokeWidth="1.8" />
          </svg>
        </div>
        <div className="flex flex-col">
          <Deck>
            <rect x="2" y="1" width="28" height="30" rx="1" fill="#f4f4f4" stroke="#9c9c9c" strokeWidth="1.5" />
            <rect x="11" y="4" width="10" height="23" fill="#f8f8f8" stroke="#888" />
            <rect x="13" y="6" width="6" height="8" fill="#ccc" />
          </Deck>
          <Deck active>
            <text x="1" y="22" fontSize="27" fill="#4a4a4a" fontFamily="Liberation Sans">A</text>
            <Tip />
          </Deck>
          <Deck>
            <rect x="1" y="1" width="30" height="30" fill="#d8a0b8" stroke="#9c9c9c" />
            <circle cx="16" cy="19" r="9" fill="#f5a66a" />
            <path d="M1 23c5-6 8-4 12-5s7-4 9-2 6 4 9 5v3H1z" fill="#222" />
          </Deck>
          <Deck>
            <circle cx="16" cy="16" r="14" fill="#2a7fe8" stroke="#0a50c0" />
            <circle cx="16" cy="16" r="10" fill="#8cc0f5" />
            <path d="M22 8l-3 11-5-5z" fill="#d8343c" />
            <path d="M10 24l3-11 6 6z" fill="#ddd" />
          </Deck>
          <Deck><Page x={4} w={24} /></Deck>
          <Deck>
            <path d="M2 12c5-7 11-7 15-5" fill="none" stroke="#777" strokeWidth="1.6" />
            <circle cx="10" cy="10" r="4" fill="#0a5ed7" />
            <Tip />
          </Deck>
          <Deck>{Icons.track.props.children}</Deck>
          <Deck>
            <Page x={3} w={23} />
            <circle cx="24" cy="24" r="8" fill="#0a5ed7" />
            <circle cx="24" cy="20" r="1.500" fill="#fff" />
            <path d="M19 22h10M24 22v4l-3 4M24 26l3 4" stroke="#fff" strokeWidth="1.5" fill="none" />
          </Deck>
          <Deck><Bino /></Deck>
        </div>
      </div>
    </div>
  );
}

const Cell = ({ w, c = "", children }) => (
  <div className={`flex h-[26px] shrink-0 items-center border-r border-[#c8c8c8] ${w} ${c}`}>{children}</div>
);

function StatusBar() {
  return (
    <div className="flex h-[30px] shrink-0 items-center border-t border-[#aaa] bg-[#efefef] text-[17px] text-[#111]">
      <Cell w="w-[42px]" c="justify-center">
        <svg width="24" height="26" viewBox="0 0 24 26">
          <path d="M1 1h22v24H4l-3-3zM1 14h22M6 18h14v7H6z" fill="none" stroke="#f0605a" strokeWidth="1.5" />
        </svg>
      </Cell>
      <Cell w="w-[364px]" c="pl-[11px]">Страницы 2 и 3 из 6</Cell>
      <Cell w="w-[457px]" c="pl-[11px]">650 слов, 5 201 символ</Cell>
      <Cell w="w-[333px]" c="pl-[76px]">Базовый</Cell>
      <Cell w="w-[262px]" c="justify-center">Русский</Cell>
      <Cell w="w-[98px]" />
      <Cell w="w-[64px]" c="gap-[6px] pl-[13px]">
        <span className="h-[17px] w-[24px] rounded-[3px] border-2 border-[#2a62d0] bg-[#f0f4ff]" />
        <svg width="8" height="26" viewBox="0 0 8 26">
          <path d="M0 1h8M4 1v24M0 25h8" stroke="#888" strokeWidth="1.5" />
        </svg>
      </Cell>
      <Cell w="w-[40px]" />
      <Cell w="w-[492px]" />
      <Cell w="w-[126px]" c="pl-[10px]">
        <svg width="116" height="26" viewBox="0 0 116 26">
          <path d="M1 2h12l5 5v18H1z" fill="#f8f8f8" stroke="#888" strokeWidth="1.5" />
          <path d="M27 2h12l5 5v18H27z" fill="#0a5ed7" stroke="#888" />
          <path d="M47 2h12l5 5v18H47z" fill="#0a5ed7" stroke="#888" />
          <path d="M72 7l5-5h12v23H72zM89 2h12l5 5v18H89z" fill="#f8f8f8" stroke="#888" strokeWidth="1.5" />
        </svg>
      </Cell>
      <Cell w="w-[211px]" c="pl-[4px]">
        <svg width="206" height="26" viewBox="0 0 206 26">
          <path d="M21 13h160M80 9v8" stroke="#666" strokeWidth="1.5" />
          <circle cx="11" cy="13" r="10" fill="#eee" stroke="#777" strokeWidth="1.5" />
          <path d="M5 13h12" stroke="#555" strokeWidth="2" />
          <circle cx="195" cy="13" r="10" fill="#eee" stroke="#777" strokeWidth="1.5" />
          <path d="M189 13h12M195 7v12" stroke="#555" strokeWidth="2" />
          <path d="M104 2h14a2 2 0 012 2v13l-9 8-9-8V4a2 2 0 012-2z" fill="#f0f0f4" stroke="#888" strokeWidth="1.5" />
        </svg>
      </Cell>
      <div className="flex-1 text-center">140 %</div>
    </div>
  );
}

export default function App() {
  return (
    <div className="flex h-[1528px] w-[2560px] flex-col overflow-hidden bg-white font-['Noto_Sans',sans-serif]">
      <div className="flex h-[34px] shrink-0 items-center bg-[#f0f2f8] pl-[4px] text-[17px] text-[#222]">
        <svg width="20" height="24" viewBox="0 0 20 24" className="shrink-0">
          <path d="M2 0h11l7 7v15a2 2 0 01-2 2H2a2 2 0 01-2-2V2a2 2 0 012-2z" fill="#2f8fd8" />
          <path d="M13 0l7 7h-7z" fill="#a5d4f5" />
          <path d="M4 11h6v1.500H4zm0 3h6v1.500H4zm0 3h12v1.500H4zM12 10h4v4h-4z" fill="#fff" />
        </svg>
        <span className="ml-[10px]">Профессия инженер-исследователь.odt — LibreOffice Writer</span>
        <svg width="170" height="16" viewBox="0 0 170 16" className="ml-auto mr-[14px]">
          <path d="M0 8.500h15" stroke="#222" />
          <rect x="69.500" y="4.500" width="11" height="11" rx="2" fill="none" stroke="#222" strokeWidth="1.2" />
          <path d="M72 3V2.500a2 2 0 012-2h7a2 2 0 012 2v8a2 2 0 01-2 1.500" fill="none" stroke="#222" strokeWidth="1.2" />
          <path d="M140 1l14 14M154 1l-14 14" stroke="#222" strokeWidth="1.1" />
        </svg>
      </div>
      <div className="flex h-[32px] shrink-0 items-center gap-[23px] bg-white pl-[12px] text-[17px] text-[#111]">
        {["Файл", "Правка", "Вид", "Вставка", "Формат", "Стили", "Таблица", "Форма", "Сервис", "Окно", "Справка"].map((m) => (
          <span key={m}>{m}</span>
        ))}
        <svg width="12" height="12" viewBox="0 0 12 12" className="ml-auto mr-[7px]">
          <path d="M1 1l10 10M11 1L1 11" stroke="#555" strokeWidth="1.5" />
        </svg>
      </div>
      <Toolbars />
      <div className="flex min-h-0 flex-1 bg-[#efefef]">
        <div className="flex w-[1918px] shrink-0 flex-col">
          <div className="relative flex h-[30px] shrink-0 items-start pl-[139px] pt-[4px]">
            <span className="absolute left-[11px] top-[15px] h-[6px] w-[7px] border-b-2 border-l-2 border-[#555]" />
            <HRuler />
          </div>
          <div className="flex min-h-0 flex-1 overflow-hidden">
            <div className="w-[139px] shrink-0 pl-[4px] pt-[633px]">
              <VRuler />
            </div>
            <Pages />
          </div>
        </div>
        <div className="flex w-[27px] shrink-0 justify-center border-l border-[#f8f8f8] pt-[397px]">
          <div className="h-[118px] w-[5px] rounded-full bg-[#888]" />
        </div>
        <div className="w-px shrink-0 bg-[#a0a0a0]" />
        <Sidebar />
      </div>
      <StatusBar />
    </div>
  );
}
